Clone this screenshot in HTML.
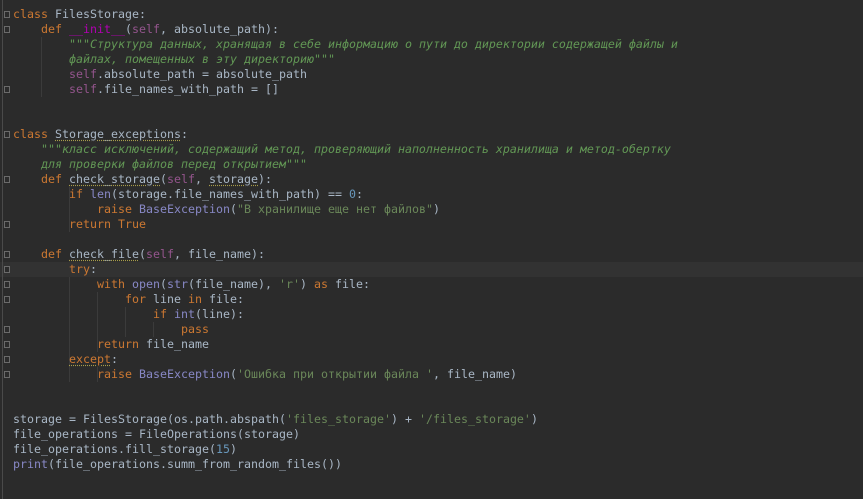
<!DOCTYPE html>
<html><head><meta charset="utf-8"><style>
html,body{margin:0;padding:0;width:863px;height:499px;overflow:hidden;background:#2b2b2b}
#ed{position:absolute;left:13px;top:7px;font-family:"DejaVu Sans Mono","Liberation Mono",monospace;font-size:11.63px;line-height:15px;color:#a9b7c6}
.l{height:15px;white-space:pre}
.k{color:#cc7832}.s{color:#94558d}.m{color:#b200b2}.d{color:#629755;font-style:italic}.st{color:#6a8759}.n{color:#6897bb}.b{color:#8888c6}
.u{text-decoration:underline dotted #a89d4a;text-underline-offset:2px}
.cur{position:absolute;left:0;top:262px;width:863px;height:15px;background:#323232}
.gut{position:absolute;left:2px;top:0;width:1px;height:499px;background:#4a4a4a}
.f{position:absolute;left:4px;width:6px;height:7px;border:1px solid #6a6a6a;box-sizing:border-box;background:#2b2b2b}
.g{position:absolute;width:1px;background:#3b3b3b}
</style></head><body>
<div class="cur"></div>
<div class="gut"></div>
<div class="f" style="top:11px"></div><div class="f" style="top:26px"></div><div class="f" style="top:86px"></div>
<div class="f" style="top:131px"></div><div class="f" style="top:176px"></div><div class="f" style="top:221px"></div>
<div class="f" style="top:251px"></div><div class="f" style="top:266px"></div><div class="f" style="top:281px"></div><div class="f" style="top:296px"></div>
<div class="f" style="top:326px"></div><div class="f" style="top:341px"></div><div class="f" style="top:356px"></div><div class="f" style="top:371px"></div>
<div class="g" style="left:41px;top:37px;height:60px"></div>
<div class="g" style="left:69px;top:187px;height:45px"></div>
<div class="g" style="left:69px;top:277px;height:105px"></div>
<div class="g" style="left:97px;top:292px;height:60px"></div>
<div class="g" style="left:125px;top:307px;height:30px"></div>
<div class="g" style="left:153px;top:322px;height:15px"></div>
<div class="g" style="left:97px;top:367px;height:15px"></div>
<div id="ed"><div class="l"><span class="k">class</span> FilesStorage:</div><div class="l">    <span class="k">def</span> <span class="m">__init__</span>(<span class="s">self</span>, absolute_path):</div><div class="l">        <span class="d">"""Структура данных, хранящая в себе информацию о пути до директории содержащей файлы и</span></div><div class="l"><span class="d">        файлах, помещенных в эту директорию"""</span></div><div class="l">        <span class="s">self</span>.absolute_path = absolute_path</div><div class="l">        <span class="s">self</span>.file_names_with_path = []</div><div class="l"> </div><div class="l"> </div><div class="l"><span class="k">class</span> <span class="u">Storage_exceptions</span>:</div><div class="l">    <span class="d">"""класс исключений, содержащий метод, проверяющий наполненность хранилища и метод-обертку</span></div><div class="l"><span class="d">    для проверки файлов перед открытием"""</span></div><div class="l">    <span class="k">def</span> <span class="u">check_storage</span>(<span class="s">self</span>, <span class="u">storage</span>):</div><div class="l">        <span class="k">if</span> <span class="b">len</span>(storage.file_names_with_path) == <span class="n">0</span>:</div><div class="l">            <span class="k">raise</span> <span class="b">BaseException</span>(<span class="st">"В хранилище еще нет файлов"</span>)</div><div class="l">        <span class="k">return True</span></div><div class="l"> </div><div class="l">    <span class="k">def</span> <span class="u">check_file</span>(<span class="s">self</span>, file_name):</div><div class="l">        <span class="k">try</span>:</div><div class="l">            <span class="k">with</span> <span class="b">open</span>(<span class="b">str</span>(file_name), <span class="st">'r'</span>) <span class="k">as</span> file:</div><div class="l">                <span class="k">for</span> line <span class="k">in</span> file:</div><div class="l">                    <span class="k">if</span> <span class="b">int</span>(line):</div><div class="l">                        <span class="k">pass</span></div><div class="l">            <span class="k">return</span> file_name</div><div class="l">        <span class="k u">except</span>:</div><div class="l">            <span class="k">raise</span> <span class="b">BaseException</span>(<span class="st">'Ошибка при открытии файла '</span>, file_name)</div><div class="l"> </div><div class="l"> </div><div class="l">storage = FilesStorage(os.path.abspath(<span class="st">'files_storage'</span>) + <span class="st">'/files_storage'</span>)</div><div class="l">file_operations = FileOperations(storage)</div><div class="l">file_operations.fill_storage(<span class="n">15</span>)</div><div class="l"><span class="b">print</span>(file_operations.summ_from_random_files())</div></div>
</body></html>
